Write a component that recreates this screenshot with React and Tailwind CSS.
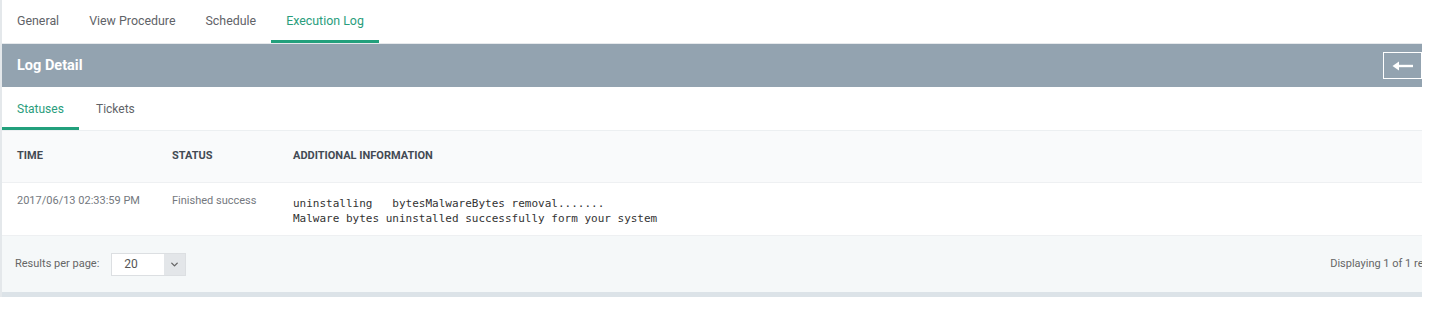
import React from 'react';
import { ChevronDown } from 'lucide-react';

const topTabs = ['General', 'View Procedure', 'Schedule', 'Execution Log'];

const App = () => {
  return (
    <div className="w-[1440px] h-[311px] bg-white font-['Roboto',sans-serif] overflow-hidden">
      <div className="w-[1422px] border-l-2 border-[#e4e8eb]">
        {/* Top tabs */}
        <div className="h-[44px] flex items-stretch border-b border-[#e6e9ec]">
          {topTabs.map((t) => {
            const active = t === 'Execution Log';
            return (
              <div
                key={t}
                className={
                  active
                    ? 'px-[15px] flex items-center text-[12.4px] text-[#2a9d7c] border-b-[3px] border-[#22a07c] pt-[3px]'
                    : 'px-[15px] flex items-center text-[12.4px] text-[#5f6368] border-b-[3px] border-transparent pt-[3px]'
                }
              >
                {t}
              </div>
            );
          })}
        </div>

        {/* Log Detail bar */}
        <div className="h-[43px] bg-[#93a3b0] flex items-center justify-between pl-[15px]">
          <span className="text-white font-bold text-[14.5px]">Log Detail</span>
          <div className="w-[39px] h-[27px] border border-white flex items-center justify-center">
            <svg width="22" height="10" viewBox="0 0 22 10">
              <path d="M5 5 H21" stroke="white" strokeWidth="2.4" />
              <path d="M0.5 5 L7 0.5 L7 9.5 Z" fill="white" />
            </svg>
          </div>
        </div>

        {/* Sub tabs */}
        <div className="h-[44px] flex items-stretch border-b border-[#eceff1]">
          <div className="w-[77px] pl-[15px] flex items-center text-[12px] text-[#2a9d7c] border-b-[3px] border-[#22a07c] pt-[3px]">
            Statuses
          </div>
          <div className="pl-[17px] flex items-center text-[12px] text-[#5f6368] border-b-[3px] border-transparent pt-[3px]">
            Tickets
          </div>
        </div>

        {/* Table header */}
        <div className="h-[52px] bg-[#f9fafb] flex items-center border-b border-[#eef0f2] text-[11px] font-bold text-[#434a54] uppercase">
          <div className="w-[170px] pl-[15px]">Time</div>
          <div className="w-[121px]">Status</div>
          <div>Additional Information</div>
        </div>

        {/* Row */}
        <div className="h-[53px] flex items-center border-b border-[#eef0f2]">
          <div className="w-[170px] pl-[15px] text-[11px] text-[#74787e] -mt-[15px]">2017/06/13 02:33:59 PM</div>
          <div className="w-[121px] text-[11px] text-[#74787e] -mt-[15px]">Finished success</div>
          <div className="mt-[3px] font-['DejaVu_Sans_Mono',monospace] text-[11px] leading-[15px] text-[#333] whitespace-pre">
            <div>{'uninstalling   bytesMalwareBytes removal.......'}</div>
            <div>Malware bytes uninstalled successfully form your system</div>
          </div>
        </div>

        {/* Footer */}
        <div className="h-[61px] bg-[#f5f8f9] flex items-center justify-between pl-[13px] border-b-[5px] border-[#dce3e8] overflow-hidden">
          <div className="flex items-center gap-[12px]">
            <span className="text-[11px] text-[#666]">Results per page:</span>
            <div className="w-[75px] h-[23px] bg-white border border-[#dcdfe2] flex items-stretch">
              <div className="flex-1 flex items-center pl-[12px] text-[12px] text-[#555]">20</div>
              <div className="w-[21px] bg-[#e3e6e9] flex items-center justify-center">
                <ChevronDown className="w-[11px] h-[11px] text-[#666]" strokeWidth={3} />
              </div>
            </div>
          </div>
          <span className="shrink-0 mr-[-29px] text-[11px] text-[#666] whitespace-nowrap">Displaying 1 of 1 records</span>
        </div>
      </div>
    </div>
  );
};

export default App;
